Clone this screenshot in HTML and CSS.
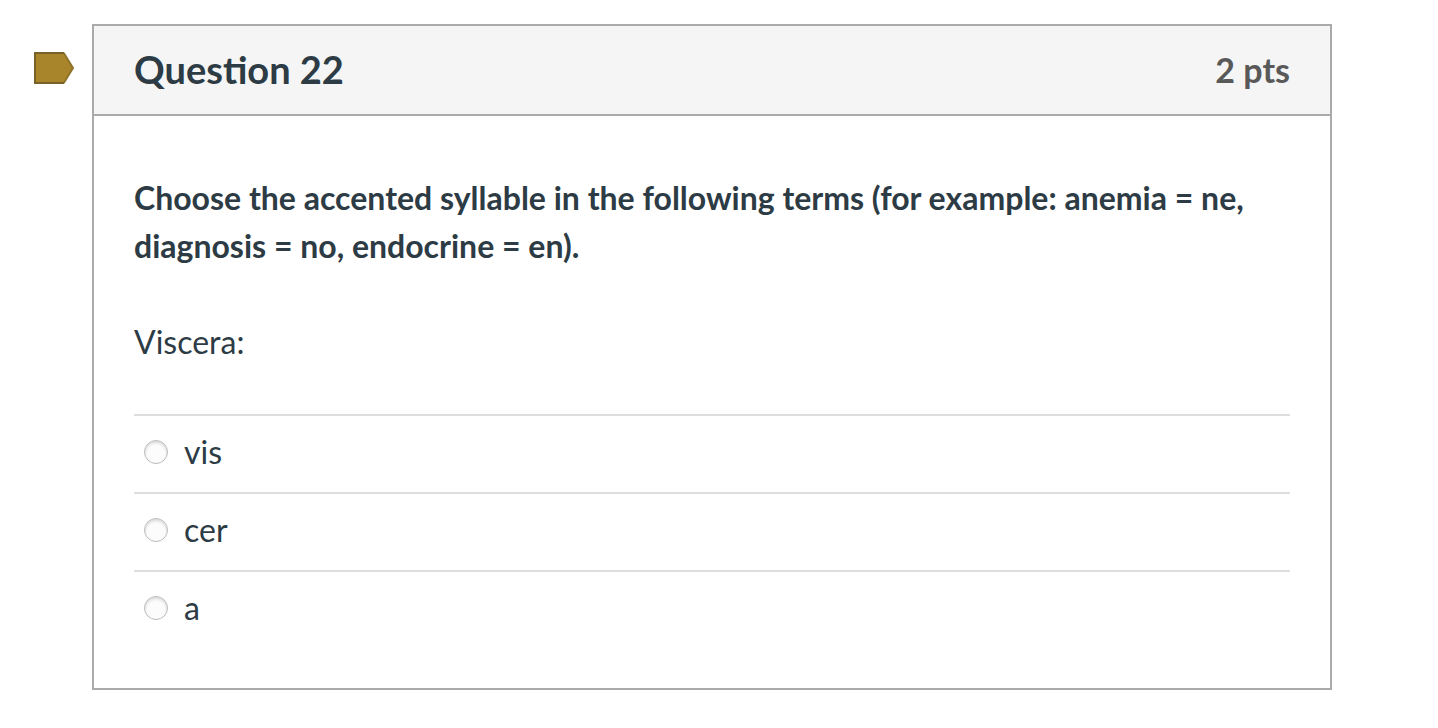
FILE: index.html
```html
<!DOCTYPE html>
<html lang="en">
<head>
<meta charset="utf-8">
<title>Question 22</title>
<link rel="stylesheet" href="styles.css">
</head>
<body>
<main class="quiz">
  <button class="flag" type="button" aria-label="Flag question">
    <svg class="flag-icon" viewBox="0 0 40 32" aria-hidden="true">
      <path d="M0 0H30L40 16L30 32H0Z" fill="#a8852a"/>
      <path d="M30 1H1V31H30" fill="none" stroke="#786227" stroke-width="2"/>
      <path d="M30 1L39 16L30 31" fill="none" stroke="#75602a" stroke-opacity=".5" stroke-width="2"/>
    </svg>
  </button>
  <section class="question">
    <header class="question-header">
      <h1 class="question-name">Question 22</h1>
      <span class="question-points">2 pts</span>
    </header>
    <form class="question-body">
      <p class="prompt"><strong>Choose the accented syllable in the following terms (for example: anemia = ne, diagnosis = no, endocrine = en).</strong></p>
      <p class="prompt" id="term">Viscera:</p>
      <div class="answers" role="radiogroup" aria-labelledby="term">
        <label class="answer"><input class="radio" type="radio" name="answer">vis</label>
        <label class="answer"><input class="radio" type="radio" name="answer">cer</label>
        <label class="answer"><input class="radio" type="radio" name="answer">a</label>
      </div>
    </form>
  </section>
</main>
</body>
</html>
```
FILE: styles.css
```css
* {
  box-sizing: border-box;
}

body {
  margin: 0;
  background: #fff;
  color: #2d3b45;
  font-family: Lato, "Liberation Sans", sans-serif;
  font-size: 32px;
  line-height: 48px;
}

.quiz {
  display: flex;
  align-items: flex-start;
  gap: 18px;
  padding: 24px 106px 24px 34px;
}

.flag {
  flex: none;
  width: 40px;
  height: 32px;
  margin-top: 28px;
  padding: 0;
  border: 0;
  background: none;
}

.flag-icon {
  display: block;
  width: 100%;
}

.question {
  flex: 1;
  border: 2px solid #aaa;
}

.question-header {
  display: flex;
  justify-content: space-between;
  align-items: center;
  padding: 19px 40px 21px;
  border-bottom: 2px solid #aaa;
  background: #f5f5f5;
}

.question-name {
  margin: 0;
  font-size: 38px;
  font-weight: 700;
}

.question-points {
  padding-top: 2px;
  color: #595959;
  font-size: 34px;
  line-height: 46px;
  font-weight: 700;
}

.question-body {
  padding: 58px 40px 40px;
}

.prompt {
  margin: 0 0 48px;
}

.answers {
  display: flex;
  flex-direction: column;
}

.answer {
  display: flex;
  align-items: center;
  gap: 16px;
  padding: 12px 10px 16px;
  border-top: 2px solid #ddd;
}

.radio {
  appearance: none;
  flex: none;
  width: 24px;
  height: 24px;
  margin: 0;
  border: 1px solid #bbb;
  border-radius: 50%;
  background: #fcfcfc;
  box-shadow: inset 0 2px 3px rgba(0, 0, 0, 0.14);
}

.radio:checked {
  border: 7px solid #2d3b45;
}
```
